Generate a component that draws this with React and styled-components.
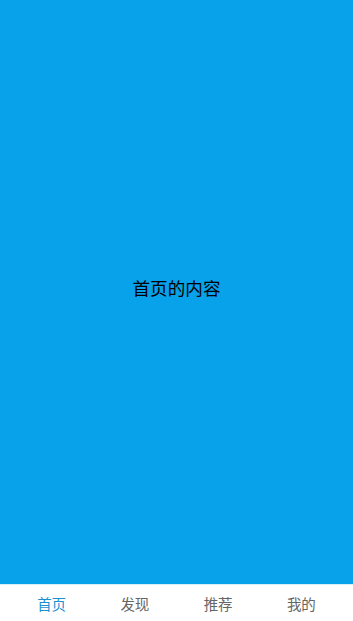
import React, { useState } from "react";
import styled, { createGlobalStyle } from "styled-components";

const Global = createGlobalStyle`
  html, body, #root { margin: 0; padding: 0; height: 100%; }
  body { font-family: "Noto Sans CJK SC", "Noto Sans", sans-serif; background: #fff; }
`;

const Page = styled.div`
  display: flex;
  flex-direction: column;
  height: 100vh;
`;

const Content = styled.main`
  flex: 1;
  background: #07a2ea;
  display: flex;
  align-items: center;
  justify-content: center;
  font-size: 17.6px;
  color: #000;
  padding-bottom: 10px;
`;

const TabBar = styled.nav`
  height: 36px;
  display: grid;
  grid-template-columns: repeat(4, 1fr);
  padding: 0 10px;
  border-top: 1px solid #d9eef9;
  background: #fff;
`;

const Tab = styled.div`
  display: flex;
  align-items: center;
  justify-content: center;
  font-size: 14.5px;
  color: ${(p) => (p.$active ? "#1a90d0" : "#666")};
`;

const tabs = ["首页", "发现", "推荐", "我的"];

export default function App() {
  const [active, setActive] = useState(0);
  return (
    <Page>
      <Global />
      <Content>{tabs[active]}的内容</Content>
      <TabBar>
        {tabs.map((t, i) => (
          <Tab key={t} $active={i === active} onClick={() => setActive(i)}>
            {t}
          </Tab>
        ))}
      </TabBar>
    </Page>
  );
}
